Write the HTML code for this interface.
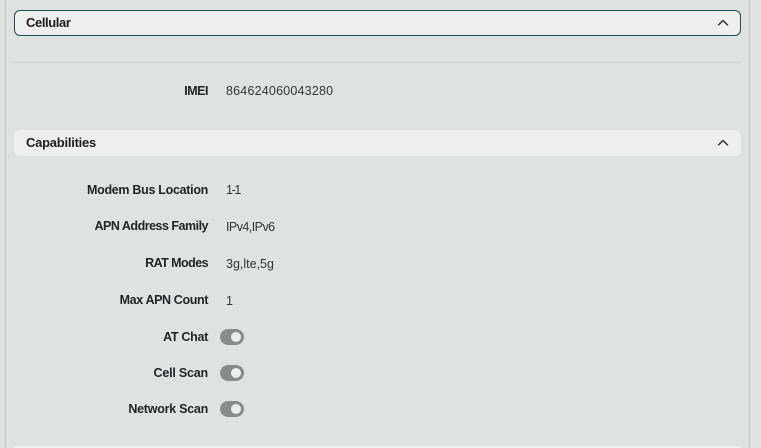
<!DOCTYPE html>
<html><head><meta charset="utf-8"><style>
html,body{margin:0;padding:0;width:761px;height:448px;overflow:hidden;background:#e0e2e1}
body{position:relative;font-family:"Liberation Sans",sans-serif;color:#1c1e1f}
div{position:absolute;box-sizing:border-box}
.l{right:553px;font-size:12.5px;font-weight:bold;line-height:16px;white-space:nowrap;color:#222426}
.v{left:226px;font-size:12.5px;line-height:16px;white-space:nowrap;color:#333537}
.h{left:14px;width:727px;height:26px;background:#eeeeee;border-radius:6px}
.t{left:26px;font-size:13px;font-weight:bold;line-height:16px;color:#1c1e1f}
.sw{left:220px;width:24px;height:16px;border-radius:8px;background:#8a8b8b}
.sw:after{content:"";position:absolute;left:11px;top:3px;width:10px;height:10px;border-radius:50%;background:#eeeeee}
svg{position:absolute}
</style></head><body>
<div style="left:5px;top:0;width:1px;height:448px;background:#c8caca"></div>
<div style="left:749px;top:0;width:1px;height:448px;background:#c8caca"></div>
<div class="h" style="top:10px;border:1px solid #155252"></div>
<div class="t" style="top:15px;letter-spacing:-.4px">Cellular</div>
<svg style="left:717px;top:18px" width="12" height="10" viewBox="0 0 12 10"><path d="M1.2 7.300L6 2.500l4.800 4.800" fill="none" stroke="#2a2c2e" stroke-width="1.400"/></svg>
<div style="left:14px;top:62px;width:727px;height:1px;background:#cfd1d1"></div>
<div class="l" style="top:83px;letter-spacing:-.5px">IMEI</div>
<div class="v" style="top:83px;letter-spacing:.2px">864624060043280</div>
<div class="h" style="top:130px"></div>
<div class="t" style="top:135px;letter-spacing:-.25px">Capabilities</div>
<svg style="left:717px;top:138px" width="12" height="10" viewBox="0 0 12 10"><path d="M1.2 7.300L6 2.500l4.800 4.800" fill="none" stroke="#2a2c2e" stroke-width="1.400"/></svg>
<div class="l" style="top:182px;letter-spacing:-.3px">Modem Bus Location</div>
<div class="v" style="top:182px;letter-spacing:-1.4px">1-1</div>
<div class="l" style="top:218px;letter-spacing:-.5px">APN Address Family</div>
<div class="v" style="top:219px;letter-spacing:-.55px">IPv4,IPv6</div>
<div class="l" style="top:255px;letter-spacing:-.55px">RAT Modes</div>
<div class="v" style="top:256px">3g,lte,5g</div>
<div class="l" style="top:292px;letter-spacing:-.38px">Max APN Count</div>
<div class="v" style="top:293px">1</div>
<div class="l" style="top:329px;letter-spacing:-.3px">AT Chat</div>
<div class="sw" style="top:329px"></div>
<div class="l" style="top:365px;letter-spacing:-.2px">Cell Scan</div>
<div class="sw" style="top:365px"></div>
<div class="l" style="top:401px;letter-spacing:-.25px">Network Scan</div>
<div class="sw" style="top:401px"></div>
<div class="h" style="top:446px;height:2px;border-radius:6px 6px 0 0"></div>
</body></html>
